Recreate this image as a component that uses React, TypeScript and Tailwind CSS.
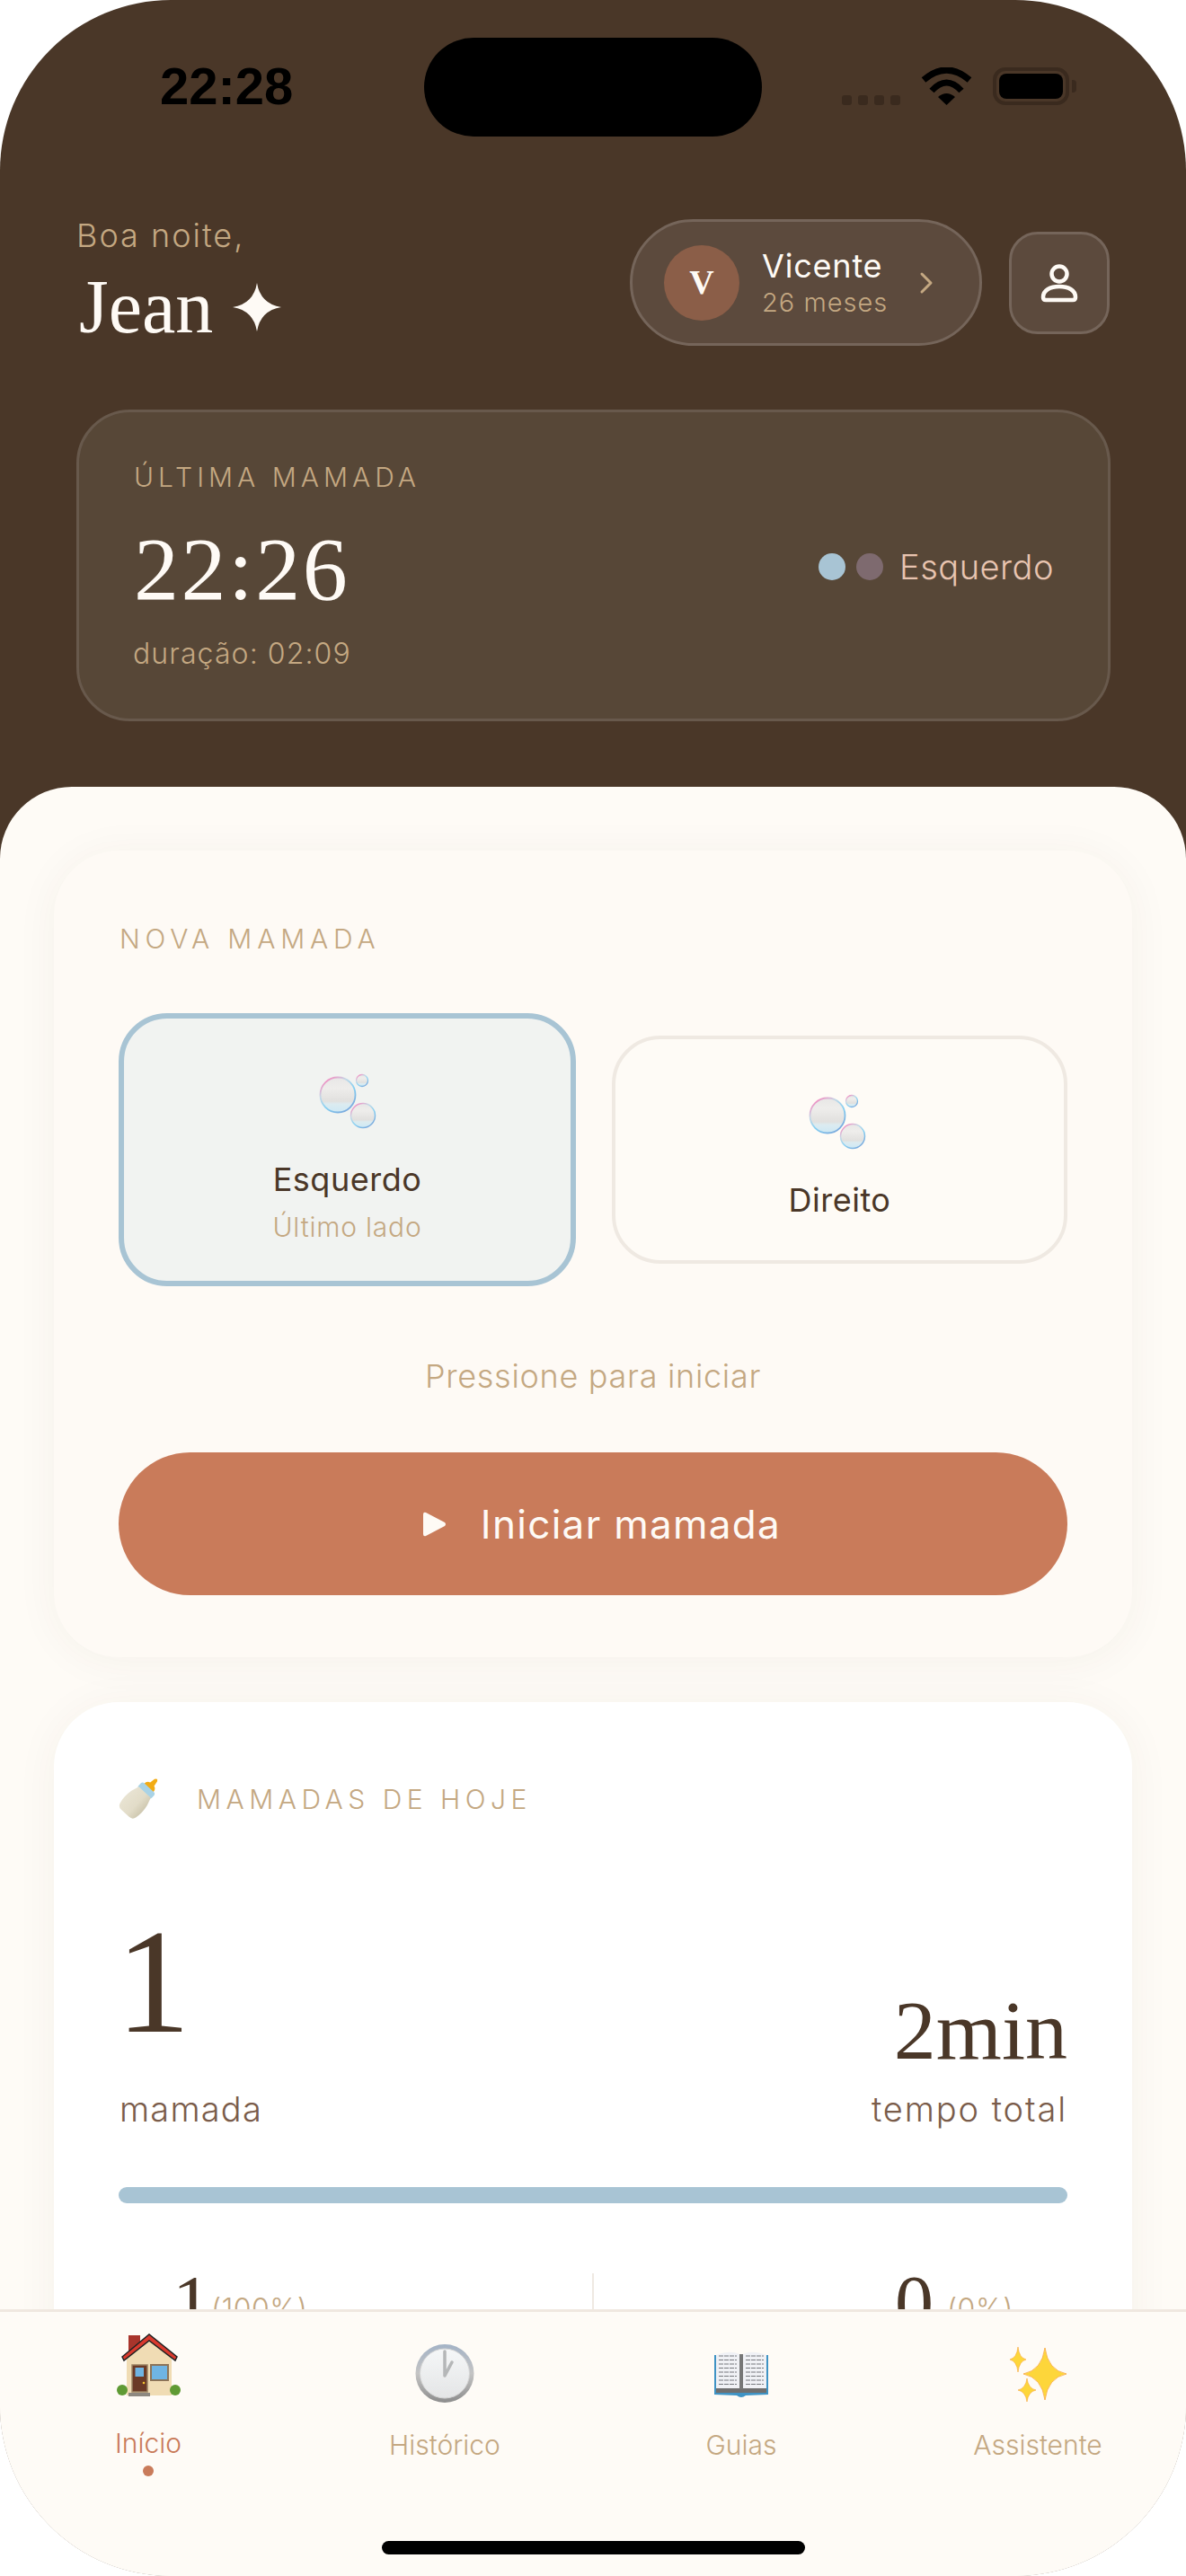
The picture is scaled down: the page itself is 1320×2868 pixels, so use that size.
const sans = "font-['Inter','Liberation_Sans',sans-serif]";
const serif = "font-['Liberation_Serif',serif]";

function star(cx: number, cy: number, rx: number, ry: number) {
  const k = 0.14;
  return `M${cx} ${cy - ry}Q${cx + rx * k} ${cy - ry * k} ${cx + rx} ${cy}Q${cx + rx * k} ${cy + ry * k} ${cx} ${cy + ry}Q${cx - rx * k} ${cy + ry * k} ${cx - rx} ${cy}Q${cx - rx * k} ${cy - ry * k} ${cx} ${cy - ry}Z`;
}

function WifiIcon() {
  return (
    <svg width="57" height="42" viewBox="0 0 57 42">
      <path d="M3 14Q28.500 -8 54 14" fill="none" stroke="#000" strokeWidth="7" />
      <path d="M12 26Q28.500 8 45 26" fill="none" stroke="#000" strokeWidth="7" />
      <path d="M28.500 42L19 33Q28.500 25 38 33Z" fill="#000" />
    </svg>
  );
}

function Bubbles({ id }: { id: string }) {
  return (
    <svg width="80" height="72" viewBox="0 0 80 72">
      <defs>
        <linearGradient id={id + "f"} x1="0" y1="0" x2="0" y2="1">
          <stop offset="0%" stopColor="#e8e7e6" />
          <stop offset="30%" stopColor="#eeedeb" />
          <stop offset="68%" stopColor="#e1e0de" />
          <stop offset="76%" stopColor="#dcebf0" />
          <stop offset="100%" stopColor="#cde8f4" />
        </linearGradient>
        <linearGradient id={id + "s"} x1="15%" y1="5%" x2="80%" y2="95%">
          <stop offset="0%" stopColor="#f58ac0" />
          <stop offset="30%" stopColor="#c4d8e6" />
          <stop offset="60%" stopColor="#86d0f2" />
          <stop offset="100%" stopColor="#7aa8dc" />
        </linearGradient>
      </defs>
      <circle cx="21" cy="25" r="19.500" fill={`url(#${id}f)`} stroke={`url(#${id}s)`} strokeWidth="1.800" />
      <circle cx="48" cy="9" r="6.500" fill={`url(#${id}f)`} stroke={`url(#${id}s)`} strokeWidth="1.300" />
      <circle cx="49" cy="48" r="13.500" fill={`url(#${id}f)`} stroke={`url(#${id}s)`} strokeWidth="1.500" />
    </svg>
  );
}

function BottleIcon() {
  return (
    <svg width="47" height="48" viewBox="0 0 47 48">
      <defs>
        <linearGradient id="milk" x1="0" y1="0" x2="1" y2="0">
          <stop offset="0%" stopColor="#e8e3d2" />
          <stop offset="60%" stopColor="#e2dcc8" />
          <stop offset="100%" stopColor="#cfc8b0" />
        </linearGradient>
      </defs>
      <g transform="translate(8 39) rotate(43)">
        <path d="M-7 -37Q-7 -42 -3 -43L-2 -49Q0 -53 2 -49L3 -43Q7 -42 7 -37Z" fill="#f2ab14" />
        <rect x="-10" y="-38" width="20" height="9" rx="3" fill="#a9d3e6" />
        <path d="M-9 -31H9Q11 -25 12 -22Q14 -12 12 -4Q11 1 6 1H-6Q-11 1 -12 -4Q-14 -12 -12 -22Q-11 -25 -9 -31Z" fill="url(#milk)" />
      </g>
    </svg>
  );
}

function HouseIcon() {
  return (
    <svg width="80" height="80" viewBox="0 0 80 80">
      <rect x="18" y="5" width="13" height="20" fill="#a8352c" />
      <path d="M16 30L41 9L66 30V72H16Z" fill="#f0dcb4" />
      <path d="M11 29L41 4L72 29L70 33L41 11L13 33Z" fill="#d93a2e" stroke="#222" strokeWidth="1.500" />
      <rect x="22" y="38" width="17" height="30" fill="#6b3a26" stroke="#9a8263" strokeWidth="1.500" />
      <rect x="25.500" y="41" width="9.500" height="10" fill="#6fb4e3" />
      <circle cx="35" cy="58" r="1.300" fill="#f2c230" />
      <rect x="43" y="38" width="19" height="17" fill="#6fb4e3" stroke="#8c7458" strokeWidth="2" />
      <circle cx="11" cy="66" r="6" fill="#5f9a34" />
      <circle cx="70" cy="66" r="6" fill="#5f9a34" />
      <rect x="18" y="69" width="24" height="4" fill="#8d8880" />
    </svg>
  );
}

function ClockIcon() {
  return (
    <svg width="80" height="80" viewBox="0 0 80 80">
      <defs>
        <linearGradient id="rim" x1="0" y1="0" x2="0" y2="1">
          <stop offset="0%" stopColor="#a4b3c6" />
          <stop offset="50%" stopColor="#c4c4c4" />
          <stop offset="100%" stopColor="#8c8c8c" />
        </linearGradient>
        <linearGradient id="face" x1="0" y1="0" x2="0" y2="1">
          <stop offset="0%" stopColor="#f5f7f8" />
          <stop offset="100%" stopColor="#e4e5e6" />
        </linearGradient>
      </defs>
      <circle cx="40" cy="47.500" r="32.500" fill="url(#rim)" />
      <circle cx="40" cy="47.500" r="27.500" fill="url(#face)" stroke="#d4d4d4" />
      <path d="M40 50V23M40 50L48 35" fill="none" stroke="#b5b7b8" strokeWidth="3.500" strokeLinecap="round" />
    </svg>
  );
}

function BookIcon() {
  const lines = [28, 32.500, 37, 41.500, 46, 50.500, 55, 59.500];
  return (
    <svg width="80" height="80" viewBox="0 0 80 80">
      <path d="M10 27H70V71L45 72Q40 76 35 72L10 71Z" fill="#3f93c4" />
      <path d="M12 27Q28 21 38 26V65H12Z" fill="#f0f1f5" />
      <path d="M68 27Q52 21 42 26V65H68Z" fill="#f0f1f5" />
      <rect x="12" y="64" width="56" height="5" fill="#6f6f6f" />
      <rect x="38" y="26" width="4" height="39" fill="#777" />
      {lines.map((y) => (
        <g key={y} stroke="#77797e" strokeWidth="1" strokeDasharray="5 1">
          <path d={`M15 ${y}H35`} />
          <path d={`M45 ${y}H65`} />
        </g>
      ))}
    </svg>
  );
}

function SparklesIcon() {
  return (
    <svg width="80" height="80" viewBox="0 0 80 80">
      <path d={star(48, 48, 24, 29)} fill="#fdd63a" stroke="#f9a63a" strokeWidth="0.800" />
      <path d={star(18, 32, 9, 14)} fill="#fdd63a" stroke="#f9a63a" strokeWidth="0.600" />
      <path d={star(28, 66, 10, 13)} fill="#fdd63a" stroke="#f9a63a" strokeWidth="0.600" />
    </svg>
  );
}

function NavItem({ icon, label, active }: { icon: React.ReactNode; label: string; active?: boolean }) {
  return (
    <div className="flex flex-col items-center">
      <div className="h-[80px] w-[80px]">{icon}</div>
      <span className={`mt-[29px] text-[30px] font-light leading-[36px] ${active ? "-translate-y-[2px] text-[#c97b5a]" : "text-[#c4a882]"}`}>
        {label}
      </span>
      {active && <span className="mt-[5px] h-[12px] w-[12px] rounded-full bg-[#c97b5a]" />}
    </div>
  );
}

export default function App() {
  return (
    <div className={`h-[2868px] w-[1320px] overflow-hidden bg-white ${sans}`}>
      <div className="relative h-[2868px] overflow-hidden rounded-[190px] bg-[#4a3728]">
        {/* status bar */}
        <div className="absolute left-[472px] top-[42px] h-[110px] w-[376px] rounded-full bg-black" />
        <div className="flex h-[244px] items-start justify-between pl-[178px] pr-[122px] pt-[63px]">
          <span className="font-['Liberation_Sans',sans-serif] text-[58px] font-bold leading-[66px] text-black">22:28</span>
          <div className="mt-[12px] flex items-end">
            <div className="flex gap-[7px]">
              {[0, 1, 2, 3].map((i) => (
                <span key={i} className="h-[11px] w-[11px] rounded-[3px] bg-[#3a2a1e]" />
              ))}
            </div>
            <div className="ml-[23px]">
              <WifiIcon />
            </div>
            <div className="ml-[23px] flex h-[42px] w-[85px] items-center rounded-[14px] border-[4px] border-[#3a2a1e] p-[3px]">
              <div className="h-full w-full rounded-[8px] bg-black" />
            </div>
            <div className="mb-[14px] ml-[3px] h-[14px] w-[5px] rounded-r-[4px] bg-[#3a2a1e]" />
          </div>
        </div>

        {/* greeting */}
        <div className="flex h-[212px] items-start justify-between pl-[85px] pr-[85px]">
          <div>
            <p className="text-[36px] font-light leading-[36px] tracking-[2px] text-[#c4a882]">Boa noite,</p>
            <div className={`ml-[3px] mt-[30px] flex items-center text-[84px] leading-[64px] text-[#fefaf5] ${serif}`}>
              <span>Jean</span>
              <svg width="54" height="54" viewBox="0 0 54 54" className="ml-[22px]">
                <path d={star(27, 27, 27, 27)} fill="#fefaf5" />
              </svg>
            </div>
          </div>
          <div className="flex items-center gap-[30px]">
            <div className="flex h-[141px] w-[392px] items-center rounded-full border-[3px] border-[#75655a] bg-[#5c4a3d] pl-[35px]">
              <div className={`flex h-[84px] w-[84px] shrink-0 items-center justify-center rounded-full bg-[#8b5e48] text-[38px] font-bold text-[#fefaf5] ${serif}`}>V</div>
              <div className="ml-[25px] flex w-[146px] shrink-0 flex-col whitespace-nowrap">
                <span className="text-[36px] leading-[44px] tracking-[0.800px] text-[#fefaf5]">Vicente</span>
                <span className="text-[29px] font-light leading-[38px] tracking-[1px] text-[#c4a882]">26 meses</span>
              </div>
              <svg width="20" height="28" viewBox="0 0 20 28" className="ml-[27px]">
                <path d="M5 4L15 14L5 24" fill="none" stroke="#c4a882" strokeWidth="3" strokeLinecap="round" strokeLinejoin="round" />
              </svg>
            </div>
            <div className="flex h-[114px] w-[112px] items-center justify-center rounded-[32px] border-[3px] border-[#75655a] bg-[#5c4a3d]">
              <svg width="44" height="44" viewBox="0 0 44 44" fill="none" stroke="#fefaf5" strokeWidth="4.500">
                <circle cx="22" cy="12" r="8.500" />
                <path d="M4 38C4 30 12 26 22 26C32 26 40 30 40 38C40 40 39 41 37 41H7C5 41 4 40 4 38Z" />
              </svg>
            </div>
          </div>
        </div>

        {/* last feed card */}
        <div className="mx-[85px] mt-0 h-[347px] w-[1151px] rounded-[60px] border-[3px] border-[#68594c] bg-[#574737] pl-[61px] pr-[60px] pt-[54px]">
          <p className="text-[30px] font-light leading-[36px] tracking-[5px] text-[#c4a882]">ÚLTIMA MAMADA</p>
          <div className="mt-[35px] flex items-center justify-between">
            <span className={`text-[100px] leading-[100px] tracking-[2.500px] text-[#fefaf5] ${serif}`}>22:26</span>
            <div className="-mt-[6px] flex items-center">
              <span className="h-[30px] w-[30px] rounded-full bg-[#a8c4d4]" />
              <span className="ml-[12px] h-[30px] w-[30px] rounded-full bg-[#7e6a6f]" />
              <span className="ml-[18px] text-[38px] font-light leading-[48px] tracking-[0.500px] text-[#e8c4b0]">Esquerdo</span>
            </div>
          </div>
          <p className="-ml-[1px] mt-[24px] text-[32px] font-light leading-[40px] tracking-[1.100px] text-[#c4a882]">duração: 02:09</p>
        </div>

        {/* sheet */}
        <div className="mt-[73px] h-[2000px] rounded-t-[80px] bg-[#fefbf6] px-[60px] pt-[71px]">
          <div className="h-[898px] rounded-[72px] bg-[#fefaf5] px-[72px] pt-[80px] shadow-[0_4px_48px_rgba(74,55,40,0.05)]">
            <p className="ml-[1px] text-[30px] font-light leading-[36px] tracking-[5.800px] text-[#c4a882]">NOVA MAMADA</p>
            <div className="mt-[65px] flex items-center justify-between">
              <div className="flex h-[304px] w-[509px] flex-col items-center rounded-[54px] border-[6px] border-[#a8c4d4] bg-[#f1f3f1] pt-[60px]">
                <div className="ml-[16px]">
                  <Bubbles id="a" />
                </div>
                <span className="mt-[25px] text-[36px] leading-[44px] tracking-[0.500px] text-[#4a3728]">Esquerdo</span>
                <span className="mt-[13px] text-[30px] font-light leading-[36px] tracking-[0.800px] text-[#c4a882]">Último lado</span>
              </div>
              <div className="flex h-[254px] w-[507px] flex-col items-center rounded-[54px] border-[4px] border-[#efe9e2] bg-[#fefbf6] pt-[60px]">
                <div className="ml-[10px]">
                  <Bubbles id="b" />
                </div>
                <span className="mt-[25px] text-[36px] leading-[44px] tracking-[0.500px] text-[#4a3728]">Direito</span>
              </div>
            </div>
            <p className="mt-[78px] text-center text-[36px] font-light leading-[44px] tracking-[0.700px] text-[#c4a882]">Pressione para iniciar</p>
            <div className="mt-[63px] flex h-[159px] items-center justify-center rounded-full bg-[#c97b5a] pl-[18px]">
              <svg width="28" height="28" viewBox="0 0 28 28">
                <path d="M2 3Q2 0 5 1L26 12Q28 14 26 16L5 27Q2 28 2 25Z" fill="#fefaf5" />
              </svg>
              <span className="ml-[38px] text-[44px] leading-[52px] tracking-[1.300px] text-[#fefaf5]">Iniciar mamada</span>
            </div>
          </div>

          <div className="mt-[50px] h-[900px] rounded-[72px] bg-white px-[72px] pt-[84px] shadow-[0_4px_48px_rgba(74,55,40,0.05)]">
            <div className="flex items-center">
              <BottleIcon />
              <span className="ml-[40px] text-[30px] font-light leading-[36px] tracking-[5.500px] text-[#c4a882]">MAMADAS DE HOJE</span>
            </div>
            <div className="mt-[96px] flex items-end justify-between">
              <div className="flex flex-col">
                <span className={`-ml-[3px] text-[166px] leading-[166px] text-[#4a3728] ${serif}`}>1</span>
                <span className="ml-[1px] mt-[36px] text-[38px] font-light leading-[46px] tracking-[1.200px] text-[#7a5c4a]">mamada</span>
              </div>
              <div className="flex flex-col items-end">
                <span className={`text-[94px] leading-[94px] text-[#4a3728] ${serif}`}>2min</span>
                <span className="mt-[18px] text-[38px] font-light leading-[46px] tracking-[1.900px] text-[#7a5c4a]">tempo total</span>
              </div>
            </div>
            <div className="mt-[64px] h-[18px] rounded-full bg-[#a8c4d4]" />
            <div className="mt-[68px] flex items-start px-[60px]">
              <div className="flex flex-1 items-end">
                <span className={`text-[86px] leading-[86px] text-[#4a3728] ${serif}`}>1</span>
                <span className="mb-[18px] text-[32px] font-light leading-[36px] tracking-[0.500px] text-[#c4a882]">(100%)</span>
              </div>
              <div className="mt-[10px] h-[60px] w-[2px] bg-[#efe9e2]" />
              <div className="flex flex-1 items-end justify-end">
                <span className={`text-[86px] leading-[86px] text-[#4a3728] ${serif}`}>0</span>
                <span className="mb-[18px] ml-[15px] text-[32px] font-light leading-[36px] tracking-[0.500px] text-[#c4a882]">(0%)</span>
              </div>
            </div>
          </div>
        </div>

        {/* bottom nav */}
        <div className="absolute inset-x-0 bottom-0 h-[297px] border-t-[3px] border-[#f0e8e0] bg-[#fefbf6]">
          <div className="grid grid-cols-4 pt-[21px]">
            <NavItem icon={<HouseIcon />} label="Início" active />
            <NavItem icon={<ClockIcon />} label="Histórico" />
            <NavItem icon={<BookIcon />} label="Guias" />
            <NavItem icon={<SparklesIcon />} label="Assistente" />
          </div>
          <div className="absolute bottom-[24px] left-[425px] h-[15px] w-[471px] rounded-full bg-black" />
        </div>
      </div>
    </div>
  );
}
